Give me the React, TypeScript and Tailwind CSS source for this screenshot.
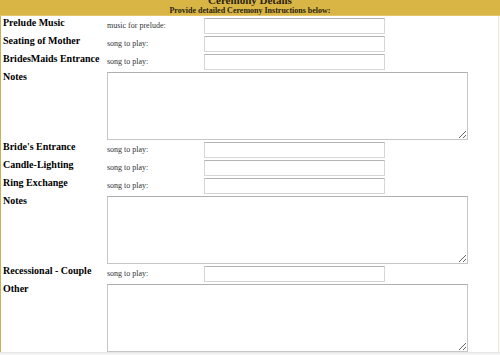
const serif = { fontFamily: '"Liberation Serif", "Times New Roman", serif' };

type Row =
  | { kind: "input"; label: string; hint: string }
  | { kind: "notes"; label: string };

const rows: Row[] = [
  { kind: "input", label: "Prelude Music", hint: "music for prelude:" },
  { kind: "input", label: "Seating of Mother", hint: "song to play:" },
  { kind: "input", label: "BridesMaids Entrance", hint: "song to play:" },
  { kind: "notes", label: "Notes" },
  { kind: "input", label: "Bride's Entrance", hint: "song to play:" },
  { kind: "input", label: "Candle-Lighting", hint: "song to play:" },
  { kind: "input", label: "Ring Exchange", hint: "song to play:" },
  { kind: "notes", label: "Notes" },
  { kind: "input", label: "Recessional - Couple", hint: "song to play:" },
  { kind: "notes", label: "Other" },
];

function Label({ text }: { text: string }) {
  return (
    <div className="-mt-[1px] text-[10px] leading-[11px] font-bold text-black whitespace-nowrap">
      {text}
    </div>
  );
}

export default function App() {
  return (
    <div className="w-[500px] h-[355px] overflow-hidden bg-white" style={serif}>
      {/* header band */}
      <div className="-mt-[6px] bg-[#d9b546] border-b border-b-[#e2c569] text-center text-[#2a2410] font-bold">
        <div className="text-[11px] leading-[12px]">Ceremony Details</div>
        <div className="text-[8px] leading-[9px]">Provide detailed Ceremony Instructions below:</div>
      </div>

      <div className="w-[499px] h-[336px] overflow-hidden border-l border-l-[#cdb055] border-r border-r-[#efe5cc] pl-[2px] pt-[2px]">
        <div className="grid grid-cols-[104px_97px_1fr] gap-y-[2px]">
          {rows.map((row, i) =>
            row.kind === "input" ? (
              <div key={i} className="contents">
                <Label text={row.label} />
                <div className="h-[16px] flex items-center text-[8px] text-[#333]">{row.hint}</div>
                <input
                  type="text"
                  className="w-[181px] h-[16px] bg-white border border-[#d6d6d6] border-t-[#b3b3b3] outline-none"
                />
              </div>
            ) : (
              <div key={i} className="contents">
                <Label text={row.label} />
                <textarea className="col-span-2 w-[361px] h-[68px] bg-white border border-[#c6c6c6] border-t-[#b0b0b0] outline-none" />
              </div>
            )
          )}
        </div>
      </div>
      <div className="h-[3px] bg-[#f3f3f3] border-t border-t-[#e6e6e6]" />
    </div>
  );
}
